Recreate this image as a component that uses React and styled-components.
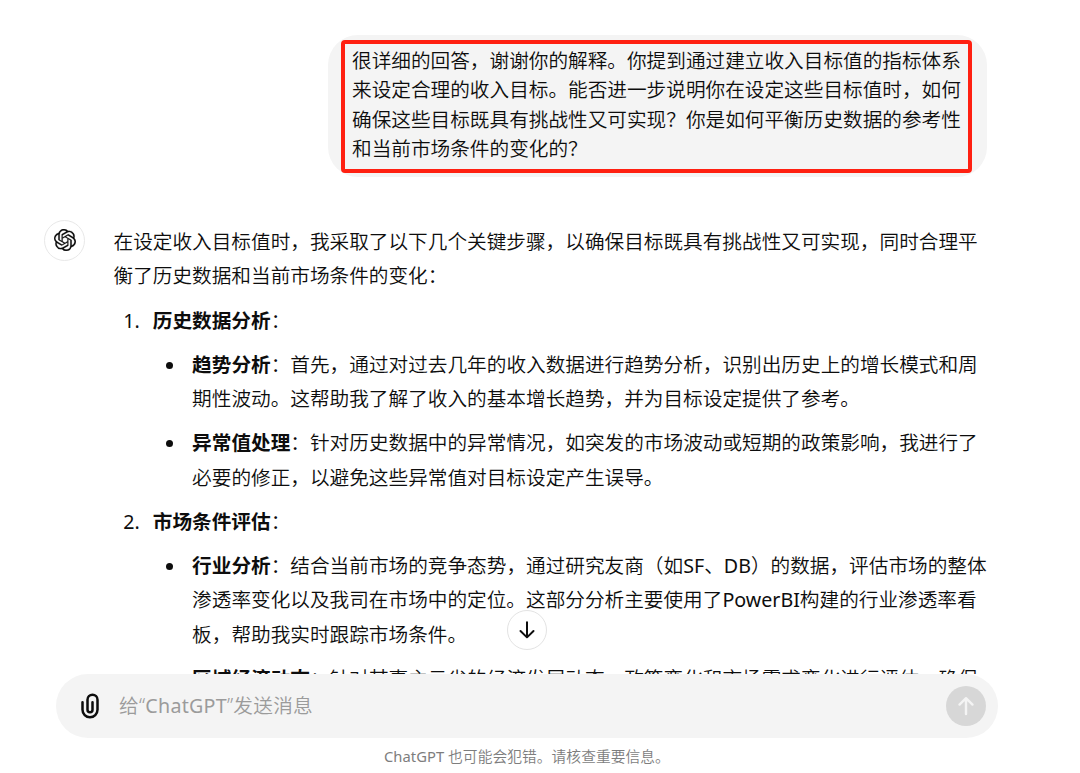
import { SiOpenai } from "react-icons/si";
import styled, { createGlobalStyle } from "styled-components";

const question = [
    "很详细的回答，谢谢你的解释。你提到通过建立收入目标值的指标体系",
    "来设定合理的收入目标。能否进一步说明你在设定这些目标值时，如何",
    "确保这些目标既具有挑战性又可实现？你是如何平衡历史数据的参考性",
    "和当前市场条件的变化的？",
];

const intro = [
    "在设定收入目标值时，我采取了以下几个关键步骤，以确保目标既具有挑战性又可实现，同时合理平",
    "衡了历史数据和当前市场条件的变化：",
];

const steps = [
    {
        title: "历史数据分析",
        points: [
            {
                label: "趋势分析",
                lines: [
                    "首先，通过对过去几年的收入数据进行趋势分析，识别出历史上的增长模式和周",
                    "期性波动。这帮助我了解了收入的基本增长趋势，并为目标设定提供了参考。",
                ],
            },
            {
                label: "异常值处理",
                lines: [
                    "针对历史数据中的异常情况，如突发的市场波动或短期的政策影响，我进行了",
                    "必要的修正，以避免这些异常值对目标设定产生误导。",
                ],
            },
        ],
    },
    {
        title: "市场条件评估",
        points: [
            {
                label: "行业分析",
                lines: [
                    "结合当前市场的竞争态势，通过研究友商（如SF、DB）的数据，评估市场的整体",
                    "渗透率变化以及我司在市场中的定位。这部分分析主要使用了PowerBI构建的行业渗透率看",
                    "板，帮助我实时跟踪市场条件。",
                ],
            },
            {
                label: "区域经济动态",
                lines: ["针对某事主云省的经济发展动态、政策变化和市场需求变化进行评估，确保"],
            },
        ],
    },
];

// Latin words take a heavier weight than the Chinese around them
const Mixed = ({ text }) =>
    text.split(/([A-Za-z]+)/).map((part, i) => (i % 2 ? <Latin key={i}>{part}</Latin> : part));

const App = () => {
    return (
        <>
            <GlobalStyle />
            <Page>
                <Thread>
                    <QuestionRow>
                        <Bubble>
                            {question.map((line) => <Line key={line}>{line}</Line>)}
                            <Highlight />
                        </Bubble>
                    </QuestionRow>
                    <AnswerRow>
                        <Avatar><SiOpenai size={22} stroke="currentColor" strokeWidth={0.2} /></Avatar>
                        <Answer>
                            <Paragraph>
                                {intro.map((line) => <Line key={line}>{line}</Line>)}
                            </Paragraph>
                            {steps.map((step, index) => (
                                <Step key={step.title}>
                                    <StepTitle>
                                        <StepNumber>{index + 1}.</StepNumber>
                                        <span><strong>{step.title}</strong>：</span>
                                    </StepTitle>
                                    {step.points.map((point) => (
                                        <Point key={point.label}>
                                            <Dot />
                                            <div>
                                                {point.lines.map((line, i) => (
                                                    <Line key={line}>
                                                        {i === 0 && <><strong>{point.label}</strong>：</>}
                                                        <Mixed text={line} />
                                                    </Line>
                                                ))}
                                            </div>
                                        </Point>
                                    ))}
                                </Step>
                            ))}
                        </Answer>
                    </AnswerRow>
                    <ScrollButton aria-label="滚动到底部">
                        <svg width="18" height="20" viewBox="0 0 18 20" fill="none" stroke="currentColor" strokeWidth="2" strokeLinecap="round" strokeLinejoin="round">
                            <path d="M9 2.200v15M2.500 11L9 17.400l6.500-6.400" />
                        </svg>
                    </ScrollButton>
                </Thread>
                <Composer>
                    <AttachButton aria-label="附件">
                        <svg width="30" height="30" viewBox="0 0 24 24" fill="currentColor">
                            <path fillRule="evenodd" clipRule="evenodd" d="M9 7a5 5 0 0 1 10 0v8a7 7 0 1 1-14 0V9a1 1 0 0 1 2 0v6a5 5 0 0 0 10 0V7a3 3 0 1 0-6 0v8a1 1 0 1 0 2 0V9a1 1 0 1 1 2 0v6a3 3 0 1 1-6 0z" />
                        </svg>
                    </AttachButton>
                    <Placeholder><Mixed text="给“ChatGPT”发送消息" /></Placeholder>
                    <SendButton aria-label="发送">
                        <svg width="18" height="20" viewBox="0 0 18 20" fill="none" stroke="currentColor" strokeWidth="2.400" strokeLinecap="round" strokeLinejoin="round">
                            <path d="M9 18V2.200M2.500 8.600L9 2.200l6.500 6.400" />
                        </svg>
                    </SendButton>
                </Composer>
                <Notice><Mixed text="ChatGPT 也可能会犯错。请核查重要信息。" /></Notice>
            </Page>
        </>
    );
}

const GlobalStyle = createGlobalStyle`
  * {
    box-sizing: border-box;
  }

  body {
    margin: 0;
    background: #fff;
    color: #0d0d0d;
    font-family: "Noto Sans", "Noto Sans CJK SC", sans-serif;
    font-size: 19.65px;
    font-weight: 350;
  }

  strong {
    font-weight: 700;
  }
`;

const Page = styled.div`
  display: flex;
  flex-direction: column;
  width: 1080px;
  height: 773px;
  overflow: hidden;
`;

const Thread = styled.main`
  position: relative;
  height: 674px;
  flex: none;
  padding: 35px 0 0 44px;
  overflow: hidden;
`;

const QuestionRow = styled.div`
  display: flex;
  justify-content: flex-end;
  padding-right: 93px;
`;

const Bubble = styled.div`
  position: relative;
  width: 659px;
  height: 142px;
  padding: 11px 24px;
  border-radius: 30px;
  background: #f4f4f4;
  line-height: 29.470px;
`;

const Highlight = styled.div`
  position: absolute;
  top: 5px;
  left: 13px;
  width: 631px;
  height: 133px;
  border: 4px solid #ff2011;
  border-radius: 4px;
`;

const Line = styled.div`
  white-space: nowrap;
`;

const Latin = styled.span`
  font-weight: 400;
`;

const AnswerRow = styled.div`
  display: flex;
  gap: 28.500px;
  margin-top: 43px;
`;

const Avatar = styled.div`
  display: flex;
  align-items: center;
  justify-content: center;
  flex: none;
  width: 41px;
  height: 41px;
  padding-bottom: 2px;
  border: 1px solid #e8e8e8;
  border-radius: 50%;
`;

const Answer = styled.div`
  padding-top: 5px;
  line-height: 34.380px;
`;

const Paragraph = styled.div`
  margin-bottom: 9.820px;
`;

const Step = styled.section`
  display: flex;
  flex-direction: column;
  gap: 9.820px;
  margin-bottom: 9.820px;
`;

const StepTitle = styled.div`
  display: flex;
`;

const StepNumber = styled.span`
  width: 39.300px;
  padding-right: 13px;
  text-align: right;
  font-weight: 400;
`;

const Point = styled.div`
  display: flex;
  padding-left: 52px;
`;

const Dot = styled.span`
  flex: none;
  width: 7px;
  height: 7px;
  margin: 14px 19.600px 0 0;
  border-radius: 50%;
  background: currentColor;
`;

const ScrollButton = styled.button`
  position: absolute;
  left: 507px;
  top: 610px;
  display: flex;
  align-items: center;
  justify-content: center;
  width: 40px;
  height: 40px;
  padding: 0;
  border: 1px solid #e3e3e3;
  border-radius: 50%;
  background: #fff;
  color: #0d0d0d;
`;

const Composer = styled.div`
  display: flex;
  align-items: center;
  flex: none;
  width: 942px;
  height: 64px;
  margin-left: 56px;
  padding: 0 12px 0 19px;
  border-radius: 32px;
  background: #f4f4f4;
`;

const AttachButton = styled.button`
  display: flex;
  padding: 0;
  border: 0;
  background: none;
  color: #0d0d0d;
`;

const Placeholder = styled.span`
  flex: 1;
  margin-left: 14px;
  padding-bottom: 3px;
  color: #9b9b9b;
  letter-spacing: 0.27px;
`;

const SendButton = styled.button`
  display: flex;
  align-items: center;
  justify-content: center;
  width: 40px;
  height: 40px;
  padding: 0;
  border: 0;
  border-radius: 50%;
  background: #d7d7d7;
  color: #f4f4f4;
`;

const Notice = styled.p`
  margin: 7px 0 0 384px;
  color: #7d7d7d;
  font-size: 14.740px;
  letter-spacing: 0.05px;
  line-height: 22px;
  white-space: nowrap;
`;

export default App;
